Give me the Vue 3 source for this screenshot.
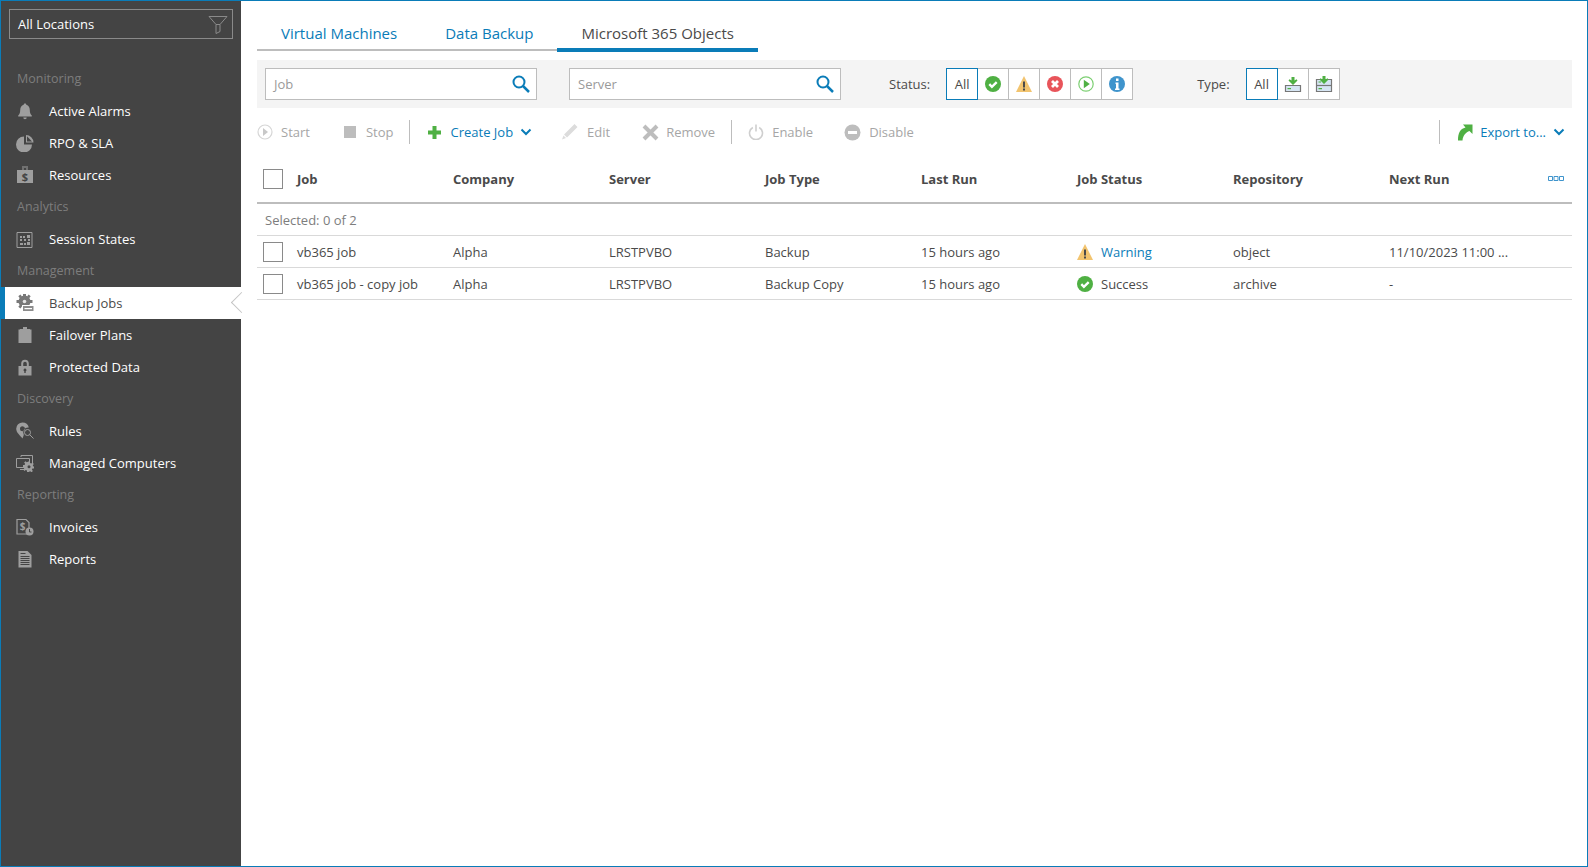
<script setup>
const statusIcons = ['ok', 'warn', 'err', 'run', 'info']
const columns = ['Job', 'Company', 'Server', 'Job Type', 'Last Run', 'Job Status', 'Repository', 'Next Run']
const navGroups = [
  { label: 'Monitoring', items: [['Active Alarms', 'bell'], ['RPO & SLA', 'pie'], ['Resources', 'money']] },
  { label: 'Analytics', items: [['Session States', 'grid']] },
  { label: 'Management', items: [['Backup Jobs', 'gear'], ['Failover Plans', 'clip'], ['Protected Data', 'lock']] },
  { label: 'Discovery', items: [['Rules', 'pin'], ['Managed Computers', 'comp']] },
  { label: 'Reporting', items: [['Invoices', 'invoice'], ['Reports', 'report']] },
]
</script>

<template>
  <div class="frame">
    <aside class="side">
      <div class="loc">
        <span>All Locations</span>
        <svg width="20" height="20" viewBox="0 0 20 20" fill="none" stroke="#8a8a8a" class="funnel"><path d="M1 2.500h18l-7 8v7l-4 2v-9z" /><path d="M12 10.500l-4 0" /></svg>
      </div>
      <template v-for="g in navGroups" :key="g.label">
        <div class="group">{{ g.label }}</div>
        <div v-for="it in g.items" :key="it[0]" class="item" :class="{ active: it[0] === 'Backup Jobs' }">
          <svg class="nicon" width="18" height="18" viewBox="0 0 18 18" fill="#9e9e9e">
            <g v-if="it[1] === 'bell'"><path d="M9 1.500c.8 0 1.300.5 1.300 1.200 2.400.7 3.500 2.700 3.500 5.300 0 2.500.6 4.200 2 5.500v1H2.200v-1c1.400-1.300 2-3 2-5.500 0-2.600 1.100-4.600 3.500-5.300C7.700 2 8.200 1.500 9 1.500z"/><path d="M7.300 15.500h3.400c0 1-.7 1.700-1.700 1.700s-1.700-.7-1.700-1.700z"/></g>
            <g v-else-if="it[1] === 'pie'"><path d="M8 2.500v8h8a8 8 0 1 1-8-8z"/><path fill-rule="evenodd" d="M10 1v7.500h7.500A7.500 7.500 0 0 0 10 1zm1 1.300l5 5.200h-5z"/></g>
            <g v-else-if="it[1] === 'money'"><path d="M6 .5h6v1H6zM6.500 2h1v2h-1zM10.500 2h1v2h-1z"/><path d="M1 4h16v13H1z"/><text x="9" y="15" text-anchor="middle" class="dollar">$</text></g>
            <g v-else-if="it[1] === 'grid'"><path d="M1 2.500h15v15H1z" fill="none" stroke="#9e9e9e"/><path d="M4 6h2v2H4zM7 6h2v2H7zM11 5h3v3h-3zM4 9h2v2H4zM8 9h2v2H8zM12 9h2v2h-2zM4 13h3v2H4zM8 13h2v2H8zM11 12h3v3h-3z"/></g>
            <g v-else-if="it[1] === 'gear'">
              <circle cx="8.500" cy="7.500" r="6" fill="#787878"/>
              <path d="M7 0h3v2.500H7zM7 12.500h3V15H7zM.5 6H3v3H.5zM14 6h2.500v3H14zM2.300 2.300L4.400.6l1.600 2L4 4.300zM12.600.6l2.100 1.700L13 4.300l-2-1.700zM2.300 12.700L4 10.700l2 1.700-1.600 2zM14.700 12.700l-2.100 1.700-1.600-2 2-1.700z" fill="#787878"/>
              <circle cx="8.500" cy="7.500" r="1.800" fill="#e4e4e4"/>
              <path d="M6 11h12v7H6z" fill="#fff"/><path d="M7 12h10.500v5H7z" fill="#8c8c8c"/><path d="M8.500 14h7.500v1.200H8.500z" fill="#fff"/>
            </g>
            <g v-else-if="it[1] === 'clip'"><path d="M7 1h4v2h3v1H4V3h3z"/><path d="M2.500 3.500h13V17h-13z"/></g>
            <g v-else-if="it[1] === 'lock'"><path d="M5.200 8V5.500a3.800 3.800 0 0 1 7.600 0V8h-2V5.500a1.800 1.800 0 0 0-3.600 0V8z"/><path fill-rule="evenodd" d="M2.500 8h13v9.500h-13zM9 10.500a1.500 1.500 0 0 0-.7 2.800V15h1.400v-1.700A1.500 1.500 0 0 0 9 10.500z"/></g>
            <g v-else-if="it[1] === 'pin'"><path fill-rule="evenodd" d="M6.500.5A6.500 6.500 0 0 1 12.800 5.500a5 5 0 0 0-5 7.500L6.500 16.500C4 13.500.2 10.500.2 6.800A6.300 6.300 0 0 1 6.500.5zm0 3.800a2.500 2.500 0 1 0 0 5 2.500 2.500 0 0 0 0-5z"/><circle cx="11.500" cy="10.500" r="3" fill="none" stroke="#9e9e9e"/><path d="M13.500 12.500L17.500 16.500" stroke="#9e9e9e" fill="none"/></g>
            <g v-else-if="it[1] === 'comp'"><path d="M5 3V1.500h11.500v8" fill="none" stroke="#9e9e9e"/><path d="M.5 4.500h13v9H.5z" fill="#444" stroke="#9e9e9e"/><path d="M4 15.500h5" stroke="#9e9e9e"/><path d="M12 7.500h2v1.600l1.300.5 1.200-1 1.300 1.400-1 1.200.5 1.300H18v2h-1.600l-.5 1.300 1 1.200-1.400 1.300-1.200-1-1.300.5V18h-2v-1.600l-1.300-.5-1.200 1-1.300-1.400 1-1.200-.5-1.300H7v-2h1.600l.5-1.300-1-1.200 1.400-1.300 1.200 1 1.300-.5z" fill="#9e9e9e"/><circle cx="13" cy="12.800" r="1.500" fill="#444"/></g>
            <g v-else-if="it[1] === 'invoice'"><path d="M1 1.500h9l3 3v11.500H1z" fill="none" stroke="#9e9e9e" stroke-width="1.200"/><text x="6.500" y="12" text-anchor="middle" class="dollar2">$</text><circle cx="13.500" cy="13.500" r="4"/><path d="M13.500 11v3h2" stroke="#444" fill="none"/></g>
            <g v-else><path fill-rule="evenodd" d="M2.500 1h9l4 4v12.500h-13zM4.500 6h9v1h-9zM4.500 8h9v1h-9zM4.500 10h9v1h-9zM4.500 12h9v1h-9zM4.500 14h9v1h-9zM4.500 3h5v1h-5z"/></g>
          </svg>
          <span>{{ it[0] }}</span>
          <i v-if="it[0] === 'Backup Jobs'" class="notch"></i>
        </div>
      </template>
    </aside>

    <main class="main">
      <nav class="tabs">
        <a class="tab">Virtual Machines</a>
        <a class="tab">Data Backup</a>
        <a class="tab on">Microsoft 365 Objects</a>
      </nav>

      <section class="filters">
        <div class="search">
          <span>Job</span>
          <svg width="18" height="18" viewBox="0 0 18 18" fill="none" stroke="#0a7cb8" stroke-width="2"><circle cx="7" cy="7" r="5.500"/><path d="M11 11l6 6" stroke-width="2.500"/></svg>
        </div>
        <div class="search second">
          <span>Server</span>
          <svg width="18" height="18" viewBox="0 0 18 18" fill="none" stroke="#0a7cb8" stroke-width="2"><circle cx="7" cy="7" r="5.500"/><path d="M11 11l6 6" stroke-width="2.500"/></svg>
        </div>
        <span class="flabel status-label">Status:</span>
        <div class="seg">
          <button class="sel">All</button>
          <button v-for="s in statusIcons" :key="s">
            <svg width="18" height="18" viewBox="0 0 18 18">
              <g v-if="s === 'ok'"><circle cx="9" cy="9" r="8" fill="#4fb043"/><path d="M5.300 9.200l2.600 2.600 4.800-4.600" fill="none" stroke="#fff" stroke-width="2.400"/></g>
              <g v-else-if="s === 'warn'"><path d="M9 1l8 16H1z" fill="#f2c46f"/><path d="M8 6.500h2v6H8zM8 13.500h2v2H8z" fill="#4a4a4a"/></g>
              <g v-else-if="s === 'err'"><circle cx="9" cy="9" r="8" fill="#e8545a"/><path d="M6 6l6 6M12 6l-6 6" stroke="#fff" stroke-width="2.800"/></g>
              <g v-else-if="s === 'run'"><circle cx="9" cy="9" r="7.200" fill="#fff" stroke="#7ccf72" stroke-width="1.200"/><path d="M6.800 4.800l6 4.200-6 4.200z" fill="#4fb043"/></g>
              <g v-else><circle cx="9" cy="9" r="8" fill="#3f94cc"/><path d="M7.500 7.500h3v6h1v1.500h-4.500v-1.500h1v-4.500h-.5zM8 3.500h2.500v2.500H8z" fill="#fff"/></g>
            </svg>
          </button>
        </div>
        <span class="flabel type-label">Type:</span>
        <div class="seg">
          <button class="sel">All</button>
          <button>
            <svg width="18" height="18" viewBox="0 0 18 18"><path d="M1.500 10.500h15v6h-15z" fill="#d6e5f3" stroke="#777" stroke-width="1.200"/><path d="M3.500 13h3.500v1.200H3.500z" fill="#4fb043"/><path d="M7.500 2h3v3.500l2-1.300 1 1.300-4.500 4.500-4.500-4.500 1-1.300 2 1.300z" fill="#4fb043"/></svg>
          </button>
          <button>
            <svg width="18" height="18" viewBox="0 0 18 18"><path d="M1.500 4.500h15v12h-15z" fill="#d6e5f3" stroke="#777" stroke-width="1.200"/><path d="M1.500 10.500h15" stroke="#777" stroke-width="1.200"/><path d="M3.500 13h3.500v1.200H3.500zM3.500 6.500h2.500v1.100H3.500z" fill="#4fb043"/><path d="M7.500 1h3v3.500l2-1.300 1 1.300-4.500 4.500-4.500-4.500 1-1.300 2 1.300z" fill="#4fb043"/></svg>
          </button>
        </div>
      </section>

      <section class="toolbar">
        <div class="tool dim">
          <svg width="16" height="16" viewBox="0 0 16 16"><circle cx="8" cy="8" r="7" fill="none" stroke="#d6d6d6" stroke-width="1.200"/><path d="M6 4l5 4-5 4z" fill="#c8c8c8"/></svg>Start
        </div>
        <div class="tool dim stop">
          <svg width="12" height="12" viewBox="0 0 12 12"><path d="M0 0h12v12H0z" fill="#bdbdbd"/></svg>Stop
        </div>
        <i class="div"></i>
        <div class="tool link create">
          <svg width="15" height="15" viewBox="0 0 15 15"><path d="M5.500 1h4v4.500H14v4H9.500V14h-4V9.500H1v-4h4.500z" fill="#4fb043"/></svg>Create Job
          <svg class="chev" width="12" height="8" viewBox="0 0 12 8"><path d="M1.500 1.500L6 6l4.500-4.500" fill="none" stroke="#0a7cb8" stroke-width="2"/></svg>
        </div>
        <div class="tool dim edit">
          <svg width="18" height="18" viewBox="0 0 18 18"><path d="M13.500 1l3 3L6 14.500l-3-3zM2.500 12.500l2.500 2.500-4 1.500z" fill="#dcdcdc"/></svg>Edit
        </div>
        <div class="tool dim remove">
          <svg width="17" height="17" viewBox="0 0 17 17"><path d="M2 2l13 13M15 2L2 15" stroke="#bdbdbd" stroke-width="4"/></svg>Remove
        </div>
        <i class="div"></i>
        <div class="tool dim">
          <svg width="16" height="16" viewBox="0 0 16 16" fill="none" stroke="#cfcfcf" stroke-width="1.600"><path d="M4.800 3.500a6.500 6.500 0 1 0 6.400 0"/><path d="M8 .5v7"/></svg>Enable
        </div>
        <div class="tool dim disable">
          <svg width="17" height="17" viewBox="0 0 17 17"><circle cx="8.500" cy="8.500" r="8" fill="#bdbdbd"/><path d="M4 7h9v3H4z" fill="#fff"/></svg>Disable
        </div>
        <i class="div export-div"></i>
        <div class="tool link export">
          <svg width="16" height="18" viewBox="0 0 16 18"><path d="M1 17.500C1 10 3 6 8.500 4.500L6 1.500h9.500V11l-3-3C9 9.500 6 12 5.500 17.500z" fill="#4fb043"/></svg>Export to...
          <svg class="chev" width="12" height="8" viewBox="0 0 12 8"><path d="M1.500 1.500L6 6l4.500-4.500" fill="none" stroke="#0a7cb8" stroke-width="2"/></svg>
        </div>
      </section>

      <section class="table">
        <div class="row head">
          <div class="chk"><i class="box"></i></div>
          <div v-for="c in columns" :key="c" class="cell">{{ c }}</div>
          <svg class="cols" width="16" height="6" viewBox="0 0 16 6" fill="none" stroke="#3f94cc"><path d="M.5.500h4v4h-4zM6 .5h4v4H6zM11.500.5h4v4h-4z"/></svg>
        </div>
        <div class="selected">Selected: 0 of 2</div>
        <div class="row body">
          <div class="chk"><i class="box"></i></div>
          <div class="cell">vb365 job</div>
          <div class="cell">Alpha</div>
          <div class="cell">LRSTPVBO</div>
          <div class="cell">Backup</div>
          <div class="cell">15 hours ago</div>
          <div class="cell st">
            <svg width="18" height="18" viewBox="0 0 18 18"><path d="M9 1l8 16H1z" fill="#f2c46f"/><path d="M8 6.500h2v6H8zM8 13.500h2v2H8z" fill="#4a4a4a"/></svg>
            <span class="warn">Warning</span>
          </div>
          <div class="cell">object</div>
          <div class="cell">11/10/2023 11:00 ...</div>
        </div>
        <div class="row body">
          <div class="chk"><i class="box"></i></div>
          <div class="cell">vb365 job - copy job</div>
          <div class="cell">Alpha</div>
          <div class="cell">LRSTPVBO</div>
          <div class="cell">Backup Copy</div>
          <div class="cell">15 hours ago</div>
          <div class="cell st">
            <svg width="18" height="18" viewBox="0 0 18 18"><circle cx="9" cy="9" r="8" fill="#4fb043"/><path d="M5.300 9.200l2.600 2.600 4.800-4.600" fill="none" stroke="#fff" stroke-width="2.400"/></svg>
            <span>Success</span>
          </div>
          <div class="cell">archive</div>
          <div class="cell">-</div>
        </div>
      </section>
    </main>
  </div>
</template>

<style>
html, body { margin: 0; background: #fff; }
</style>

<style scoped>
.frame {
  box-sizing: border-box;
  width: 1588px;
  height: 867px;
  display: flex;
  border: 1px solid #0a7cb8;
  font-family: "Open Sans", "Liberation Sans", sans-serif;
  font-size: 13px;
  color: #4a4a4a;
  overflow: hidden;
}
.side {
  width: 240px;
  flex: none;
  background: #444;
  color: #fff;
}
.loc {
  box-sizing: border-box;
  height: 30px;
  margin: 8px 8px 24px 8px;
  border: 1px solid #8a8a8a;
  padding: 0 8px;
  display: flex;
  align-items: center;
  justify-content: space-between;
  font-size: 13px;
}
.funnel { margin-right: -4px; }
.group {
  height: 32px;
  line-height: 31px;
  padding-left: 16px;
  color: #7d7d7d;
  font-size: 12.5px;
}
.item {
  position: relative;
  height: 32px;
  display: flex;
  align-items: center;
  padding-left: 15px;
  gap: 15px;
}
.nicon { flex: none; }
.dollar { font: 700 11px "Open Sans", sans-serif; fill: #444; }
.dollar2 { font: 700 10px "Open Sans", sans-serif; fill: #9e9e9e; }
.active {
  background: #fff;
  color: #4a4a4a;
  margin-left: 4px;
  padding-left: 11px;
  box-shadow: -4px 0 0 #0a7cb8;
}
.notch {
  position: absolute;
  right: -8px;
  top: 8px;
  width: 15px;
  height: 15px;
  background: #fff;
  border-left: 1px solid #c4c4c4;
  border-bottom: 1px solid #c4c4c4;
  box-sizing: border-box;
  transform: rotate(45deg);
}
.main {
  flex: 1;
  min-width: 0;
  padding: 0 15px 0 16px;
}
.tabs {
  display: flex;
  align-items: flex-start;
  height: 50px;
  box-sizing: border-box;
  padding-top: 18px;
}
.tab {
  font-size: 15px;
  line-height: 29px;
  height: 32px;
  padding: 0 24px;
  box-sizing: border-box;
  color: #0a7cb8;
  border-bottom: 2px solid #bdbdbd;
}
.tab.on {
  color: #4a4a4a;
  border-bottom: 4px solid #0a7cb8;
  height: 33px;
}
.filters {
  margin-top: 9px;
  height: 48px;
  background: #f4f4f4;
  display: flex;
  align-items: center;
  padding-left: 8px;
}
.search {
  box-sizing: border-box;
  width: 272px;
  height: 32px;
  background: #fff;
  border: 1px solid #bdbdbd;
  display: flex;
  align-items: center;
  justify-content: space-between;
  padding: 0 6px 0 8px;
  color: #9a9a9a;
}
.second { margin-left: 32px; }
.flabel { color: #4a4a4a; }
.status-label { margin-left: 48px; margin-right: 16px; }
.type-label { margin-left: 64px; margin-right: 16px; }
.seg { display: flex; height: 32px; }
.seg button {
  box-sizing: border-box;
  width: 31px;
  height: 32px;
  margin: 0;
  padding: 0;
  background: #fff;
  border: 1px solid #bdbdbd;
  border-left: 0;
  font: 13px "Open Sans", sans-serif;
  color: #4a4a4a;
  display: flex;
  align-items: center;
  justify-content: center;
}
.seg button.sel {
  width: 32px;
  border: 1px solid #0a7cb8;
}
.toolbar {
  height: 48px;
  display: flex;
  align-items: center;
  gap: 32px;
}
.tool {
  display: flex;
  align-items: center;
  gap: 8px;
  white-space: nowrap;
}
.dim { color: #a6a6a6; }
.link { color: #0a7cb8; }
.stop { gap: 10px; margin-left: 2px; }
.create { margin-left: 1px; }
.edit { margin-left: -3px; }
.remove { gap: 7px; }
.disable { margin-left: -1px; }
.chev { margin-left: -1px; }
.div {
  width: 1px;
  height: 24px;
  background: #bdbdbd;
  margin: 0 -16px;
}
.export-div { margin-left: auto; }
.export { margin-left: 1px; gap: 7px; margin-right: 7px; }
.export .chev { margin-left: 0; }
.table { margin-top: 0; }
.row {
  display: grid;
  grid-template-columns: 40px repeat(7, 156px) 1fr;
  align-items: center;
  position: relative;
}
.chk { padding-left: 6px; display: flex; }
.box {
  box-sizing: border-box;
  width: 20px;
  height: 20px;
  border: 1px solid #8a8a8a;
  background: #fff;
}
.cell { white-space: nowrap; }
.head {
  height: 48px;
  border-bottom: 2px solid #bdbdbd;
  box-sizing: border-box;
}
.head .cell { font-weight: 700; }
.cols { position: absolute; right: 8px; top: 20px; }
.selected {
  height: 32px;
  line-height: 33px;
  box-sizing: border-box;
  padding-left: 8px;
  color: #7d7d7d;
  border-bottom: 1px solid #d9d9d9;
}
.body {
  height: 32px;
  box-sizing: border-box;
  border-bottom: 1px solid #d9d9d9;
}
.st { display: flex; align-items: center; gap: 7px; }
.st svg { margin-left: -1px; }
.warn { color: #0a7cb8; }
</style>
